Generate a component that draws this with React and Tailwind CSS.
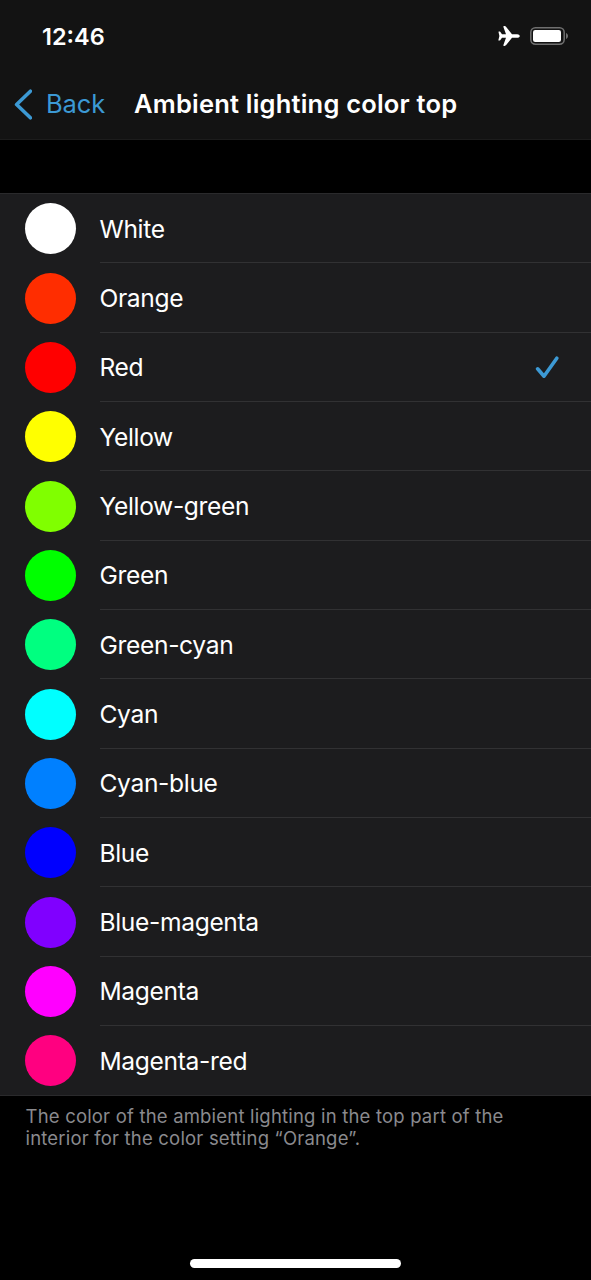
const colors = [
  { name: "White", swatch: "bg-[#ffffff]" },
  { name: "Orange", swatch: "bg-[#ff2d00]" },
  { name: "Red", swatch: "bg-[#ff0000]", selected: true },
  { name: "Yellow", swatch: "bg-[#ffff00]" },
  { name: "Yellow-green", swatch: "bg-[#80ff00]" },
  { name: "Green", swatch: "bg-[#00ff00]" },
  { name: "Green-cyan", swatch: "bg-[#00ff80]" },
  { name: "Cyan", swatch: "bg-[#00ffff]" },
  { name: "Cyan-blue", swatch: "bg-[#0080ff]" },
  { name: "Blue", swatch: "bg-[#0000ff]" },
  { name: "Blue-magenta", swatch: "bg-[#8000ff]" },
  { name: "Magenta", swatch: "bg-[#ff00ff]" },
  { name: "Magenta-red", swatch: "bg-[#ff0080]" },
];

function StatusBar() {
  return (
    <div className="flex h-[72px] items-center justify-between pl-[42px] pr-[22px]">
      <span className="pt-0.5 text-[23.5px] leading-none font-semibold">
        12:46
      </span>
      <div className="flex items-center gap-[10px]">
        <svg className="h-5 w-[22px]" viewBox="0 0 22 20" fill="#fff">
          <path d="M19.2 8.2H14L8.2.9C7.8.3 7.2.1 6.6.1H5.9c-.4 0-.6.4-.5.8L8 8.2H4L2.2 5.8C2 5.5 1.7 5.4 1.4 5.4H.9c-.3 0-.5.3-.4.6L1.4 10l-1 4c-.1.3.1.6.4.6h.6c.3 0 .6-.1.8-.4L4 11.8h4l-2.6 7.3c-.1.4.1.8.5.8h.7c.6 0 1.2-.3 1.6-.8l5.8-7.3h5.2c1.4 0 2.6-.9 2.6-1.8s-1.2-1.8-2.6-1.8Z" />
        </svg>
        <svg className="h-[18px] w-[39px]" viewBox="0 0 39 18">
          <rect
            x=".8"
            y=".8"
            width="33.4"
            height="16.4"
            rx="4.6"
            fill="none"
            stroke="#6f6f6f"
            strokeWidth="1.5"
          />
          <rect x="3" y="3" width="28" height="12" rx="2.2" fill="#fff" />
          <path d="M36 6c1.3.5 2 1.7 2 3s-.7 2.5-2 3Z" fill="#6f6f6f" />
        </svg>
      </div>
    </div>
  );
}

function NavBar() {
  return (
    <div className="flex h-[68px] items-center border-b border-[#1c1c1c] pb-[3px] pl-[14px]">
      <button className="flex items-center text-[#3c99d4]">
        <svg className="mr-[14px] h-[31px] w-[18px]" viewBox="0 0 18 31">
          <path
            d="M16.4 2.2 2.6 15.5l13.8 13.3"
            fill="none"
            stroke="currentColor"
            strokeWidth="3.6"
            strokeLinecap="round"
            strokeLinejoin="round"
          />
        </svg>
        <span className="w-[88px] text-left text-[25.5px] leading-8 tracking-[-0.1px]">
          Back
        </span>
      </button>
      <h1 className="text-[25.5px] leading-8 font-semibold tracking-[0.2px] whitespace-nowrap">
        Ambient lighting color top
      </h1>
    </div>
  );
}

function ColorRow({ color, last }) {
  return (
    <li className="flex h-[69.35px] items-center pl-[25px]">
      <span className={`size-[51px] shrink-0 rounded-full ${color.swatch}`} />
      <div
        className={`ml-6 flex h-full flex-1 items-center justify-between pt-px pr-8 ${
          last ? "" : "border-b border-[#313133]"
        }`}
      >
        <span className="-ml-[0.5px] text-[24.6px] leading-8 tracking-[-0.35px]">
          {color.name}
        </span>
        {color.selected && (
          <svg className="h-[23px] w-6" viewBox="0 0 24 23">
            <path
              d="m2.6 12.8 6.4 7.4L21.8 2.2"
              fill="none"
              stroke="#3c99d4"
              strokeWidth="3.6"
              strokeLinecap="round"
              strokeLinejoin="round"
            />
          </svg>
        )}
      </div>
    </li>
  );
}

export default function App() {
  return (
    <div className="flex h-[1280px] w-[591px] flex-col overflow-hidden bg-black font-['Inter',sans-serif] text-white">
      <header className="bg-[#131313]">
        <StatusBar />
        <NavBar />
      </header>
      <main className="mt-[53px]">
        <ul className="border-y border-[#2a2a2c] bg-[#1c1c1e]">
          {colors.map((color, i) => (
            <ColorRow
              key={color.name}
              color={color}
              last={i === colors.length - 1}
            />
          ))}
        </ul>
        <p className="mt-[9px] pl-[25.5px] text-[18.5px] leading-[22px] tracking-[0.19px] text-[#8a8a8e]">
          The color of the ambient lighting in the top part of the
          <br />
          interior for the color setting “Orange”.
        </p>
      </main>
      <div className="mx-auto mt-auto mb-[12px] h-[9px] w-[211px] rounded-full bg-white" />
    </div>
  );
}
